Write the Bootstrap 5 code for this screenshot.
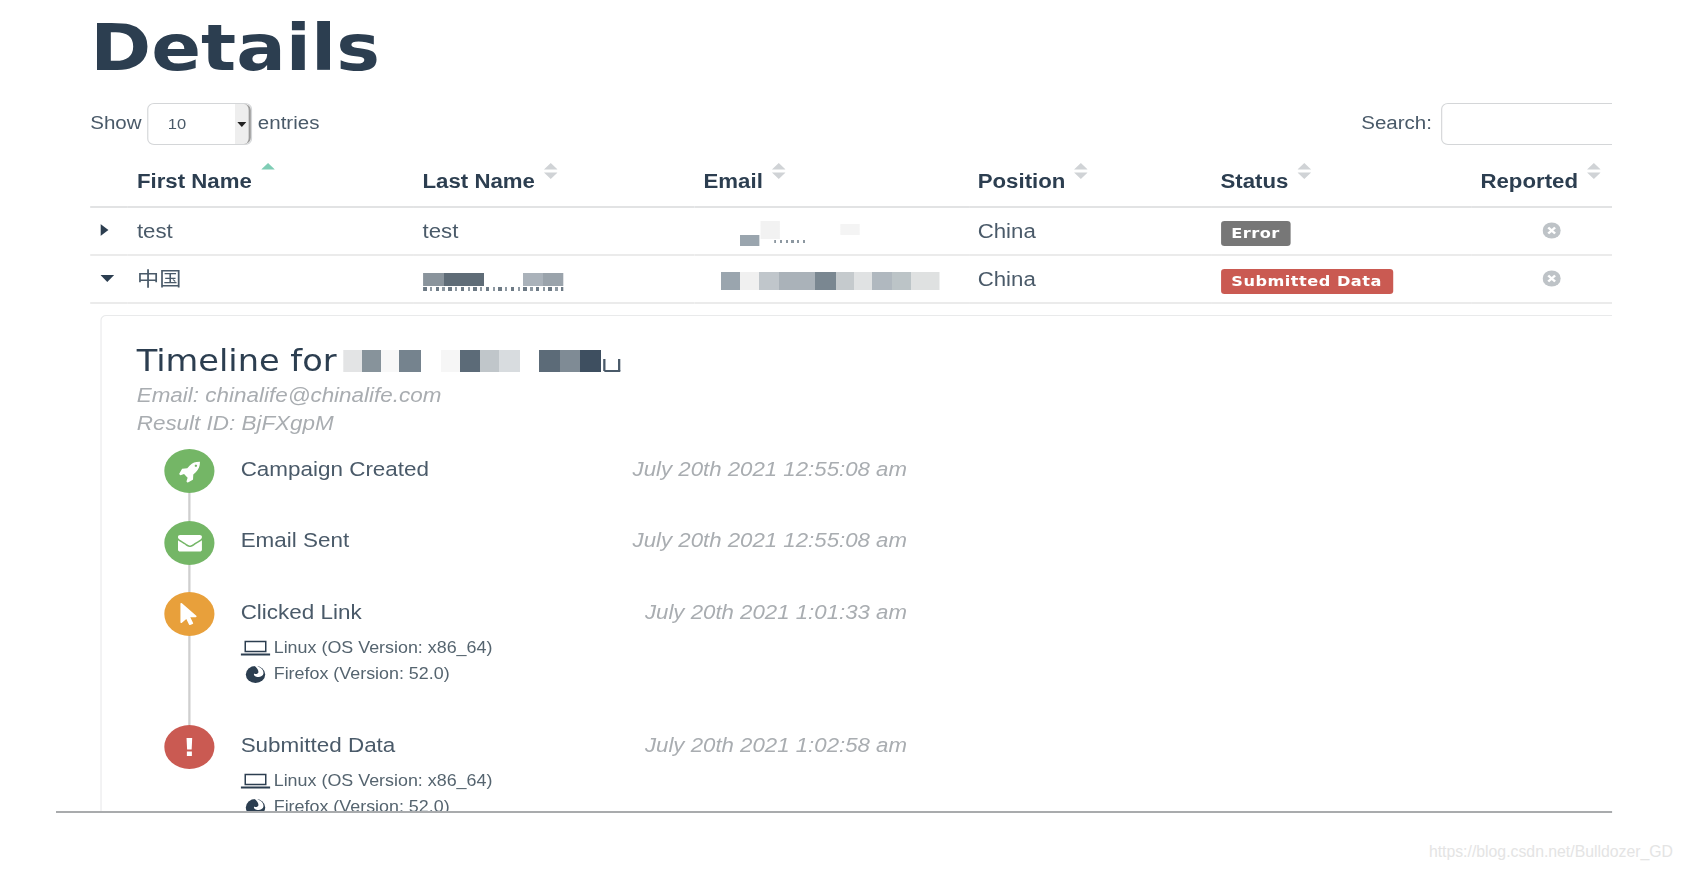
<!DOCTYPE html>
<html lang="en">
<head>
  <meta charset="UTF-8">
  <meta name="viewport" content="width=device-width, initial-scale=1.0">
  <title>Details</title>
  <link rel="stylesheet" href="https://cdn.jsdelivr.net/npm/bootstrap@5.3.2/dist/css/bootstrap.min.css">
  <script src="https://cdn.jsdelivr.net/npm/bootstrap@5.3.2/dist/js/bootstrap.bundle.min.js"></script>
  <style>
    body { background: #fff; color: #4a5a69; font-family: "Liberation Sans", Arial, sans-serif; overflow: hidden; }

    /* the reference is a horizontally stretched capture, so the whole frame is too */
    .shot-frame { width: 1365px; height: 813px; margin-left: 56px; padding: 15.5px 0 0 30px; overflow: hidden; border-bottom: 2px solid #a9abad; transform: scaleX(1.14); transform-origin: 0 0; filter: blur(.6px); }
    .page-title { font-family: "DejaVu Sans", sans-serif; font-weight: 700; font-size: 64.5px; line-height: 1; color: #2c3e50; margin: 0 0 23px; }

    .tools-bar { width: 1352px; height: 42px; font-size: 18px; }
    .tools-label { margin-top: -2px; }
    .len-wrap { gap: 5px; }
    .len-select { width: 92px; height: 42px; border: 1.5px solid #d4d6d8; border-radius: 6px; background: #fff; }
    .len-select select { appearance: none; border: 0; background: none; width: 100%; padding-left: 17px; padding-top: 2px; font-size: 14.5px; color: #4a5a69; outline: 0; }
    .len-arrow { flex: 0 0 14px; background: #eeeeee; border-right: 2px solid #9b9b9b; border-radius: 0 6px 6px 0; }
    .search-box { width: 167px; height: 42px; border: 1.5px solid #d4d6d8; border-radius: 6px; }

    .results-table { width: 1352px; margin: 5px 0 0; table-layout: fixed; font-size: 19.5px; }
    .results-table>thead>tr>th { height: 57px; padding: 0 0 12px 8px; vertical-align: bottom; line-height: 26px; color: #2c3e50; border-bottom: 2.5px solid #e2e3e4; }
    .results-table>tbody>tr>td { height: 48px; padding: 2px 0 0 8px; vertical-align: middle; color: #4a5a69; border-bottom: 2px solid #ebebeb; }
    .results-table>tbody>tr>td.reported-cell { padding-right: 6.6px; }
    .results-table>tbody>tr.detail-row>td { padding: 11px 0 0 8.6px; border-bottom: 0; vertical-align: top; }
    .cjk-cell { font-family: "Liberation Sans", "Noto Sans CJK SC", sans-serif; }
    .col-toggle { width: 33px; } .col-first { width: 250.5px; } .col-last { width: 246.5px; }
    .col-email { width: 240.5px; } .col-pos { width: 213px; } .col-stat { width: 228px; }
    .sort-mark { margin-top: -5px; }
    .row-glyph { display: block; margin: -4px 0 0 1px; }
    .reported-cell .row-glyph { margin: -3px auto 0; }

    .result-tag { font-family: "DejaVu Sans", sans-serif; font-size: 14.2px; font-weight: 700; letter-spacing: .42px; line-height: 25px; padding: 0 9.5px; border-radius: 3px; color: #fff; display: inline-block; vertical-align: middle; }
    .tag-error { background: #777; }
    .tag-submitted { background: #ca5a52; }

    .blur-block { display: inline-block; vertical-align: middle; background-repeat: no-repeat; }
    .blur-last { width: 123px; height: 18px; background-image: linear-gradient(90deg, #8a949c 0 18px, #5f6c77 18px 53px, #fff 53px 88px, #aab2ba 88px 105px, #9aa3ab 105px 123px), repeating-linear-gradient(90deg, #6d7a85 0 3px, #fff 3px 6px, #8d98a1 6px 8px, #fff 8px 11px); background-size: 100% 13px, 100% 4px; background-position: 0 0, 0 14px; margin-top: 2px; }
    .blur-mail-a { width: 140px; height: 25px; background-image: linear-gradient(#f2f2f2,#f2f2f2), linear-gradient(#f4f4f4,#f4f4f4), linear-gradient(#9aa5ae,#9aa5ae), repeating-linear-gradient(90deg, #8d98a1 0 2px, #fff 2px 5px); background-size: 17px 18px, 17px 11px, 17px 11px, 28px 3px; background-position: 50px 0, 120px 3px, 32px 14px, 62px 19px; }
    .blur-mail-b { width: 207px; height: 18px; background-image: linear-gradient(90deg, #fff 0 15px, #9aa5ae 15px 32px, #f0f0f0 32px 49px, #c0c6cb 49px 66px, #aab2b9 66px 98px, #7a8791 98px 116px, #c5cacd 116px 132px, #e0e2e3 132px 148px, #b0b8bf 148px 165px, #bcc4c7 165px 182px, #dfe1e1 182px 207px); }
    .blur-title { width: 250px; height: 22px; margin: 0 0 4px -4px; background-image: linear-gradient(#4a5a69,#4a5a69), linear-gradient(#4a5a69,#4a5a69), linear-gradient(#4a5a69,#4a5a69), linear-gradient(90deg, #e3e4e5 0 16px, #87939b 16px 33px, #f8f8f8 33px 49px, #75838e 49px 68px, #fff 68px 86px, #f6f6f6 86px 102px, #5c6b78 102px 120px, #c0c6ca 120px 137px, #d8dcdf 137px 155px, #fff 155px 172px, #5c6b78 172px 190px, #7f8b95 190px 208px, #3e4f60 208px 226px, #fff 226px 250px); background-size: 2px 12px, 14px 2px, 2px 12px, 100% 100%; background-position: 228px 9px, 229px 20px, 241px 9px, 0 0; }

    .detail-panel { width: 1400px; border: 1.5px solid #e9eaeb; border-radius: 5px; padding: 30px 0 0 31.2px; }
    .detail-title { font-family: "DejaVu Sans", sans-serif; font-size: 29.5px; font-weight: 400; line-height: 30px; height: 30px; color: #2c3e50; margin: 0 0 5px; }
    .detail-meta { font-style: italic; font-size: 19.7px; line-height: 28px; color: #a9adb1; }

    .event-list { margin: 12px 0 0 24.7px; width: 651px; }
    .event-rail { flex: 0 0 44px; }
    .event-dot { width: 44px; height: 44px; border-radius: 50%; }
    .dot-green { background: #74b666; } .dot-orange { background: #e8a03b; } .dot-red { background: #ca5a52; }
    .event-line { width: 2px; flex-grow: 1; background: #cfcfcf; }
    .event-body { padding: 6.5px 0 0 22.5px; }
    .event-name { font-size: 19.7px; line-height: 26px; color: #4a5a69; }
    .event-time { font-style: italic; font-size: 19.5px; line-height: 26px; color: #a9adb1; }
    .event-short { height: 71.5px; }
    .event-tall { height: 133px; }
    .event-meta { margin-top: 10px; font-size: 15.7px; line-height: 26px; color: #55646f; }
    .meta-icon { flex: 0 0 29px; }

    .shot-credit { text-align: right; padding: 27.5px 9px 0 0; font-size: 15.8px; line-height: 22px; color: #e4e4e4; }
  </style>
</head>
<body>

  <div class="shot-frame">
    <h1 class="page-title">Details</h1>

    <div class="tools-bar d-flex justify-content-between align-items-center">
      <div class="len-wrap d-flex align-items-center">
        <span class="tools-label">Show</span>
        <div class="len-select d-flex">
          <select aria-label="entries"><option>10</option></select>
          <span class="len-arrow d-flex align-items-center justify-content-center">
            <svg width="8" height="5" viewBox="0 0 8 5"><path d="M0 0h8L4 5z" fill="#222"/></svg>
          </span>
        </div>
        <span class="tools-label">entries</span>
      </div>
      <div class="d-flex align-items-center gap-2">
        <span class="tools-label">Search:</span>
        <input class="search-box" type="text" aria-label="Search">
      </div>
    </div>

    <table class="table results-table">
      <colgroup>
        <col class="col-toggle"><col class="col-first"><col class="col-last"><col class="col-email"><col class="col-pos"><col class="col-stat"><col>
      </colgroup>
      <thead>
        <tr>
          <th></th>
          <th><span class="d-inline-flex align-items-start gap-2">First Name
            <svg class="sort-mark" width="12" height="16" viewBox="0 0 12 16"><path d="M6 0l6 6.500H0z" fill="#7fcdb5"/></svg></span></th>
          <th><span class="d-inline-flex align-items-start gap-2">Last Name
            <svg class="sort-mark" width="12" height="16" viewBox="0 0 12 16"><path d="M6 0l6 6.500H0zM6 16l6-6.500H0z" fill="#d0d3d6"/></svg></span></th>
          <th><span class="d-inline-flex align-items-start gap-2">Email
            <svg class="sort-mark" width="12" height="16" viewBox="0 0 12 16"><path d="M6 0l6 6.500H0zM6 16l6-6.500H0z" fill="#d0d3d6"/></svg></span></th>
          <th><span class="d-inline-flex align-items-start gap-2">Position
            <svg class="sort-mark" width="12" height="16" viewBox="0 0 12 16"><path d="M6 0l6 6.500H0zM6 16l6-6.500H0z" fill="#d0d3d6"/></svg></span></th>
          <th><span class="d-inline-flex align-items-start gap-2">Status
            <svg class="sort-mark" width="12" height="16" viewBox="0 0 12 16"><path d="M6 0l6 6.500H0zM6 16l6-6.500H0z" fill="#d0d3d6"/></svg></span></th>
          <th><span class="d-inline-flex align-items-start gap-2">Reported
            <svg class="sort-mark" width="12" height="16" viewBox="0 0 12 16"><path d="M6 0l6 6.500H0zM6 16l6-6.500H0z" fill="#d0d3d6"/></svg></span></th>
        </tr>
      </thead>
      <tbody>
        <tr>
          <td><svg class="row-glyph" width="8" height="12" viewBox="0 0 8 12"><path d="M0 0l7 6-7 6z" fill="#2c3e50"/></svg></td>
          <td>test</td>
          <td>test</td>
          <td><span class="blur-block blur-mail-a"></span></td>
          <td>China</td>
          <td><span class="result-tag tag-error">Error</span></td>
          <td class="reported-cell"><svg class="row-glyph" width="16" height="17" viewBox="0 0 16 16"><circle cx="8" cy="8" r="8" fill="#bec3c7"/><path d="M5 5l6 6M11 5l-6 6" stroke="#fff" stroke-width="2.2"/></svg></td>
        </tr>
        <tr>
          <td><svg class="row-glyph" width="12" height="7" viewBox="0 0 12 7"><path d="M0 0h12L6 7z" fill="#2c3e50"/></svg></td>
          <td class="cjk-cell">中国</td>
          <td><span class="blur-block blur-last"></span></td>
          <td><span class="blur-block blur-mail-b"></span></td>
          <td>China</td>
          <td><span class="result-tag tag-submitted">Submitted Data</span></td>
          <td class="reported-cell"><svg class="row-glyph" width="16" height="17" viewBox="0 0 16 16"><circle cx="8" cy="8" r="8" fill="#bec3c7"/><path d="M5 5l6 6M11 5l-6 6" stroke="#fff" stroke-width="2.2"/></svg></td>
        </tr>
        <tr class="detail-row">
          <td colspan="7">
            <div class="detail-panel">
              <h2 class="detail-title">Timeline for <span class="blur-block blur-title"></span></h2>
              <div class="detail-meta">Email: chinalife@chinalife.com</div>
              <div class="detail-meta">Result ID: BjFXgpM</div>

              <div class="event-list">
                <div class="event-short d-flex">
                  <div class="event-rail d-flex flex-column align-items-center">
                    <div class="event-dot dot-green d-flex align-items-center justify-content-center">
                      <svg width="20" height="23" viewBox="0 0 1792 1792" preserveAspectRatio="none"><path d="M1504 448q0-40-28-68t-68-28-68 28-28 68 28 68 68 28 68-28 28-68zm224-288q0 249-75.500 430.500t-253.500 360.500q-81 80-195 176l-20 379q-2 16-16 26l-384 224q-7 4-16 4-12 0-23-9l-64-64q-13-14-8-32l85-276-281-281-276 85q-3 1-9 1-14 0-23-9l-64-64q-17-19-5-39l224-384q10-14 26-16l379-20q96-114 176-195 188-187 358-258t431-71q14 0 24 9.500t10 22.500z" fill="#fff"/></svg>
                    </div>
                    <div class="event-line"></div>
                  </div>
                  <div class="event-body flex-grow-1 d-flex justify-content-between">
                    <span class="event-name">Campaign Created</span>
                    <span class="event-time">July 20th 2021 12:55:08 am</span>
                  </div>
                </div>

                <div class="event-short d-flex">
                  <div class="event-rail d-flex flex-column align-items-center">
                    <div class="event-dot dot-green d-flex align-items-center justify-content-center">
                      <svg width="21" height="21" viewBox="0 0 1792 1792"><path d="M1792 710v794q0 66-47 113t-113 47h-1472q-66 0-113-47t-47-113v-794q44 49 101 87 362 246 497 345 57 42 92.500 65.500t94.500 48 110 24.500h2q51 0 110-24.500t94.500-48 92.500-65.500q170-123 498-345 57-39 100-87zm0-294q0 79-49 151t-122 123q-376 261-468 325-10 7-42.500 30.500t-54 38-52 32.500-57.500 27-50 9h-2q-23 0-50-9t-57.500-27-52-32.500-54-38-42.500-30.500q-91-64-262-182.500t-205-142.500q-62-42-117-115.500t-55-136.500q0-78 41.500-130t118.500-52h1472q65 0 112.500 47t47.500 113z" fill="#fff"/></svg>
                    </div>
                    <div class="event-line"></div>
                  </div>
                  <div class="event-body flex-grow-1 d-flex justify-content-between">
                    <span class="event-name">Email Sent</span>
                    <span class="event-time">July 20th 2021 12:55:08 am</span>
                  </div>
                </div>

                <div class="event-tall d-flex">
                  <div class="event-rail d-flex flex-column align-items-center">
                    <div class="event-dot dot-orange d-flex align-items-center justify-content-center">
                      <svg width="22" height="22" viewBox="0 0 1792 1792"><path d="M1389 1043q31 30 14 69-17 40-59 40h-382l201 476q10 25 0 49t-34 35l-177 75q-25 10-49 0t-35-34l-191-452-312 312q-19 19-45 19-12 0-24-5-39-17-39-59v-1504q0-42 39-59 12-5 24-5 27 0 45 19z" fill="#fff"/></svg>
                    </div>
                    <div class="event-line"></div>
                  </div>
                  <div class="event-body flex-grow-1">
                    <div class="d-flex justify-content-between">
                      <span class="event-name">Clicked Link</span>
                      <span class="event-time">July 20th 2021 1:01:33 am</span>
                    </div>
                    <div class="event-meta">
                      <div class="d-flex align-items-center">
                        <span class="meta-icon"><svg width="26" height="16" viewBox="0 0 26 16"><path d="M4 1.500h18v10H4z" fill="none" stroke="#2c3e50" stroke-width="1.300"/><path d="M0 14.500h26" stroke="#2c3e50" stroke-width="2"/></svg></span>
                        Linux (OS Version: x86_64)
                      </div>
                      <div class="d-flex align-items-center">
                        <span class="meta-icon"><svg width="26" height="18" viewBox="0 0 26 18"><circle cx="13" cy="9.500" r="8.500" fill="#2c3e50"/><path d="M11 0c5 1 9.500 4 9 8.500-.3 2.500-3 4-5.500 3.500-2-.4-3.300-2-2.800-3.500 1.500 1 3.300.5 3.800-1C16 5.500 14 2 11 0z" fill="#fff"/></svg></span>
                        Firefox (Version: 52.0)
                      </div>
                    </div>
                  </div>
                </div>

                <div class="event-tall d-flex">
                  <div class="event-rail d-flex flex-column align-items-center">
                    <div class="event-dot dot-red d-flex align-items-center justify-content-center">
                      <svg width="6" height="18" viewBox="0 0 6 18"><path d="M.5 0h5L5 11.500H1zM.8 13.500h4.400V18H.8z" fill="#fff"/></svg>
                    </div>
                  </div>
                  <div class="event-body flex-grow-1">
                    <div class="d-flex justify-content-between">
                      <span class="event-name">Submitted Data</span>
                      <span class="event-time">July 20th 2021 1:02:58 am</span>
                    </div>
                    <div class="event-meta">
                      <div class="d-flex align-items-center">
                        <span class="meta-icon"><svg width="26" height="16" viewBox="0 0 26 16"><path d="M4 1.500h18v10H4z" fill="none" stroke="#2c3e50" stroke-width="1.300"/><path d="M0 14.500h26" stroke="#2c3e50" stroke-width="2"/></svg></span>
                        Linux (OS Version: x86_64)
                      </div>
                      <div class="d-flex align-items-center">
                        <span class="meta-icon"><svg width="26" height="18" viewBox="0 0 26 18"><circle cx="13" cy="9.500" r="8.500" fill="#2c3e50"/><path d="M11 0c5 1 9.500 4 9 8.500-.3 2.500-3 4-5.500 3.500-2-.4-3.300-2-2.800-3.500 1.500 1 3.300.5 3.800-1C16 5.500 14 2 11 0z" fill="#fff"/></svg></span>
                        Firefox (Version: 52.0)
                      </div>
                    </div>
                  </div>
                </div>
              </div>
            </div>
          </td>
        </tr>
      </tbody>
    </table>
  </div>

  <div class="shot-credit">https://blog.csdn.net/Bulldozer_GD</div>

</body>
</html>
